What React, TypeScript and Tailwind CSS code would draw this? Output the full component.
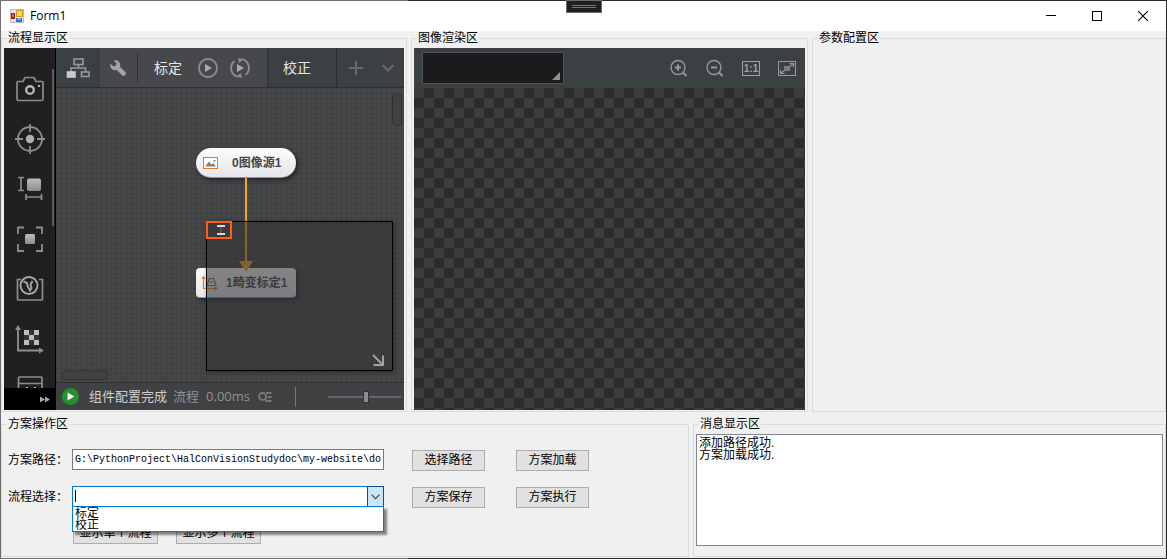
import React from "react";

const cjk = "font-['Liberation_Sans','Noto_Sans_CJK_SC',sans-serif]";

function Group({ title, children }: { title: string; children?: React.ReactNode }) {
  return (
    <fieldset className="flex min-w-0 flex-col border border-[#dcdcdc]">
      <legend className="ml-[5px] px-px text-xs leading-[14px]">{title}</legend>
      {children}
    </fieldset>
  );
}

function FormIcon() {
  return (
    <svg width="14" height="14" viewBox="0 0 14 14" aria-hidden="true">
      <rect width="14" height="14" fill="#b9bcbf" />
      <rect x="1" y="1" width="12" height="12" fill="#e4e6e8" />
      <rect x="6" y="1" width="7" height="7" fill="#d99a1c" />
      <rect x="7" y="2" width="5" height="5" fill="#ffd75e" />
      <rect x="1" y="4" width="4" height="6" fill="#a81c12" />
      <rect x="2" y="5" width="2" height="3" fill="#e8604e" />
      <rect x="6" y="9" width="6" height="4" fill="#2f6fd0" />
      <rect x="7" y="9" width="4" height="2" fill="#73abf2" />
    </svg>
  );
}

function TitleBar() {
  const btn = "flex h-[30px] w-[46px] items-center justify-center";
  return (
    <header className="relative flex h-[30px] items-center bg-white pl-[9px]">
      <FormIcon />
      <h1 className="ml-[6px] font-['Open_Sans','Noto_Sans',sans-serif] text-xs">Form1</h1>
      <div className="absolute -top-px left-1/2 flex h-[13px] w-9 -translate-x-1/2 flex-col items-center justify-center gap-px border border-[#6a6a6a] bg-[#1f1f1f]">
        <span className="h-px w-6 bg-[#777]" />
        <span className="h-px w-6 bg-[#777]" />
      </div>
      <div className="ml-auto flex">
        <button className={btn} aria-label="最小化">
          <svg width="10" height="10" viewBox="0 0 10 10"><path d="M0 4.500H10" stroke="#000" /></svg>
        </button>
        <button className={btn} aria-label="最大化">
          <svg width="10" height="10" viewBox="0 0 10 10"><rect x=".5" y=".5" width="9" height="9" fill="none" stroke="#000" /></svg>
        </button>
        <button className={btn} aria-label="关闭">
          <svg width="10" height="10" viewBox="0 0 10 10"><path d="M0 0L10 10M10 0L0 10" stroke="#000" strokeWidth="1.1" /></svg>
        </button>
      </div>
    </header>
  );
}

const tools: { name: string; art: React.ReactNode }[] = [
  {
    name: "图像采集",
    art: (
      <>
        <path d="M2.500 7.500H8L10 3.500H19L21 7.500H27Q28 7.500 28 8.500V25Q28 26.500 26.500 26.500H3.500Q2 26.500 2 25V8.500Q2 7.500 3 7.500Z" stroke="#8d8d8d" strokeWidth="1.700" />
        <circle cx="15" cy="16" r="3.800" stroke="#b5b5b5" strokeWidth="2.400" />
        <rect x="23" y="11" width="2" height="2" fill="#b5b5b5" />
      </>
    ),
  },
  {
    name: "定位",
    art: (
      <>
        <circle cx="15" cy="15" r="12" stroke="#8d8d8d" strokeWidth="1.800" />
        <path d="M15 0V8M15 22V30M0 15H8M22 15H30" stroke="#8d8d8d" strokeWidth="1.800" />
        <circle cx="15" cy="15" r="4.200" fill="#b0b0b0" />
      </>
    ),
  },
  {
    name: "测量",
    art: (
      <>
        <path d="M3 3.500H9M3 16.500H9M6 3.500V16.500M11 20V26M26.500 20V26M11 23H26.500" stroke="#8d8d8d" strokeWidth="1.700" />
        <rect x="12" y="4.500" width="14" height="12.500" rx="2" fill="url(#tool-face)" />
      </>
    ),
  },
  {
    name: "识别",
    art: (
      <>
        <path d="M3 10V3.500H9M21 3.500H27V10M27 20V27H21M9 27H3V20" stroke="#8d8d8d" strokeWidth="1.800" />
        <rect x="10" y="10" width="10" height="10" rx="1.500" fill="url(#tool-face)" />
      </>
    ),
  },
  {
    name: "图像处理",
    art: (
      <>
        <path d="M6 5.500H2.500V25Q2.500 26 3.500 26H26.500Q27.500 26 27.500 25V5.500H24" stroke="#8d8d8d" strokeWidth="1.700" />
        <circle cx="14" cy="11.500" r="8.500" stroke="#a9a9a9" strokeWidth="1.800" />
        <path d="M8.500 7.500L12 9L12.500 12L15 16.500L16.500 14L15.500 10.500L17.500 7" stroke="#a0a0a0" strokeWidth="2" />
      </>
    ),
  },
  {
    name: "标定",
    art: (
      <>
        <path d="M3 3V26.500H26" stroke="#8d8d8d" strokeWidth="1.800" />
        <path d="M0 6L3 1L6 6ZM24 23.500L29 26.500L24 29.500Z" fill="#8d8d8d" />
        <path d="M9 6H14V11H9ZM19 6H24V11H19ZM14 11H19V16H14ZM9 16H14V21H9ZM19 16H24V21H19Z" fill="#bdbdbd" />
        <path d="M14 6H19V11H14ZM9 11H14V16H9ZM19 11H24V16H19ZM14 16H19V21H14Z" fill="#333334" />
      </>
    ),
  },
  {
    name: "运算",
    art: (
      <>
        <path d="M3.500 20V4Q3.500 3 4.500 3H26Q27 3 27 4V20M3.500 9.500H27" stroke="#8d8d8d" strokeWidth="1.700" />
        <path d="M11 14H13M19 14H21" stroke="#bdbdbd" strokeWidth="2" />
      </>
    ),
  },
];

function ToolRail() {
  return (
    <nav className="flex w-[52px] shrink-0 flex-col border-r border-black bg-[#202022]">
      <div className="relative h-0 min-h-0 grow overflow-hidden pt-4">
        {tools.map((t) => (
          <button key={t.name} aria-label={t.name} className="flex h-[50px] w-full items-center justify-center">
            <svg width="30" height="30" viewBox="0 0 30 30" fill="none">
              <defs>
                <linearGradient id="tool-face" x2="0" y2="1">
                  <stop stopColor="#bcbcbc" />
                  <stop offset="1" stopColor="#8c8c8c" />
                </linearGradient>
              </defs>
              {t.art}
            </svg>
          </button>
        ))}
        <span className="absolute right-px top-[21px] h-[157px] w-0.5 bg-[#5c5c5c]" />
      </div>
      <button aria-label="展开" className="flex h-[22px] shrink-0 items-center justify-end bg-black pr-[5px]">
        <svg width="10" height="7" viewBox="0 0 10 7" fill="#a8a8a8"><path d="M0 .5L5 3.500L0 6.500ZM5 .5L10 3.500L5 6.500Z" /></svg>
      </button>
    </nav>
  );
}

function FlowToolbar() {
  return (
    <div className="flex h-10 items-stretch border-b border-[#2d2f31] bg-[#3b4043] text-sm text-[#e6e6e6]">
      <button aria-label="流程" className="flex w-11 items-center justify-center">
        <svg width="24" height="20" viewBox="0 0 24 20" fill="none" stroke="#999" strokeWidth="1.600">
          <rect x="8" y="1" width="9" height="5.500" />
          <path d="M12.500 6.500V10M5 14V10H19.500V14" />
          <rect x="15.500" y="14" width="7.500" height="4.500" />
          <rect x="1.500" y="14" width="7.500" height="5" fill="#ccc" stroke="#ccc" />
        </svg>
      </button>
      <div className="flex w-[167px] items-center bg-[#47484b]">
        <button aria-label="设置" className="flex h-full w-9 items-center justify-center">
          <svg width="16" height="16" viewBox="0 0 16 16" fill="#a3a3a3">
            <path d="M3.600.5A5 5 0 0 1 10 6.800L15.300 12.100A1.800 1.800 0 0 1 15.300 14.700L14.700 15.300A1.800 1.800 0 0 1 12.100 15.300L6.800 10A5 5 0 0 1 .5 3.600L3.400 6.500L5.700 5.800L6.500 3.400Z" />
          </svg>
        </button>
        <span className="ml-px h-[30px] w-px bg-[#2d2f31]" />
        <button className="ml-4">标定</button>
        <button aria-label="运行一次" className="ml-4">
          <svg width="20" height="20" viewBox="0 0 20 20" fill="none" stroke="#8e8e8e" strokeWidth="1.800">
            <circle cx="10" cy="10" r="9" />
            <path d="M7 6L14 10L7 14Z" fill="#aaa" stroke="none" />
          </svg>
        </button>
        <button aria-label="连续运行" className="ml-3">
          <svg width="20" height="20" viewBox="0 0 20 20" fill="none" stroke="#8e8e8e" strokeWidth="1.800">
            <path d="M8 18.800A9 9 0 0 1 4.500 3M1.200 12A9 9 0 0 1 1.500 7M12 1.200A9 9 0 0 1 15.500 17M17.500 5A9 9 0 0 1 18.500 13" />
            <path d="M8 0L13.500 1.500L9 5ZM12 20L6.500 18.500L11 15Z" fill="#8e8e8e" stroke="none" />
            <path d="M7 6L14 10L7 14Z" fill="#aaa" stroke="none" />
          </svg>
        </button>
      </div>
      <button className="w-[70px] border-x border-[#2d2f31] pr-[10px]">校正</button>
      <div className="flex flex-1 items-center justify-between pl-3 pr-[10px]">
        <button aria-label="新建流程">
          <svg width="14" height="14" viewBox="0 0 14 14" stroke="#686b6d" strokeWidth="2"><path d="M0 7H14M7 0V14" /></svg>
        </button>
        <button aria-label="更多流程">
          <svg width="12" height="8" viewBox="0 0 12 8" fill="none" stroke="#686b6d" strokeWidth="2"><path d="M.7 1L6 6.500L11.300 1" /></svg>
        </button>
      </div>
    </div>
  );
}

function FlowCanvas() {
  const node =
    "absolute flex h-[30px] w-[100px] items-center border-b border-[#b98c6c] bg-linear-to-b from-[#fcfcfb] to-[#e4e6eb] text-xs font-bold text-[#464646] shadow-[2px_2px_4px_rgba(0,0,0,0.5)]";
  return (
    <div className="relative min-h-0 flex-1 overflow-hidden bg-[#464749] bg-[linear-gradient(to_right,#3f4042_1px,transparent_1px),linear-gradient(to_bottom,#3f4042_1px,transparent_1px)] bg-size-[5px_5px]">
      <div className={`${node} left-[140px] top-[60px] rounded-full pl-[7px]`}>
        <svg width="15" height="12" viewBox="0 0 15 12">
          <rect x=".5" y=".5" width="14" height="11" fill="#fff" stroke="#f07818" />
          <path d="M2 9.500L6 4.500L8.500 7.500L10.500 6L13 9.500Z" fill="#7c8288" />
          <circle cx="11.500" cy="3.800" r="1.100" fill="#7c8288" />
        </svg>
        <span className="ml-[14px]">0图像源1</span>
      </div>
      <div className={`${node} left-[140px] top-[180px] rounded-sm pl-[5px]`}>
        <svg width="18" height="16" viewBox="0 0 18 16" fill="none">
          <path d="M2.500 2V13.500H15" stroke="#f07818" strokeWidth="1.200" />
          <path d="M.5 4L2.500 .5L4.500 4ZM13.500 11.500L17 13.500L13.500 15.500Z" fill="#f07818" />
          <path d="M8.500 3.500H12.500L15 10.500H6ZM9 7H12" stroke="#777" strokeWidth="1.200" />
        </svg>
        <span className="ml-[7px]">1畸变标定1</span>
      </div>
      <svg className="absolute left-[183px] top-[90px]" width="14" height="94" viewBox="0 0 14 94" fill="#ffa516">
        <path d="M6 0H8V84H6ZM0 83H14L7 94Z" />
      </svg>
      <div className="absolute left-[150px] top-[133px] h-[150px] w-[187px] border border-black bg-[#363638]/60 shadow-[1px_1px_4px_rgba(0,0,0,0.4)]">
        <div className="absolute -left-px -top-px flex h-[18px] w-[26px] items-center justify-center border-2 border-[#ff5e14] bg-[#3a3a3c]">
          <svg className="ml-[3px]" width="8" height="10" viewBox="0 0 8 10">
            <path d="M0 0H8V2H0ZM0 8H8V10H0Z" fill="#d8d8d8" />
            <path d="M4 2V8" stroke="#8a6a35" />
          </svg>
        </div>
        <svg className="absolute bottom-1 right-2" width="12" height="12" viewBox="0 0 12 12" fill="none" stroke="#a0a0a0" strokeWidth="2">
          <path d="M1 1L10 10M11 1.500V11H1.500" />
        </svg>
      </div>
      <span className="absolute right-[2px] top-[5px] h-[33px] w-[10px] rounded-sm border border-[#303234] bg-[#404143]" />
      <span className="absolute bottom-[2px] left-[5px] h-[10px] w-[47px] rounded-sm border border-[#303234] bg-[#404143]" />
    </div>
  );
}

function StatusBar() {
  return (
    <div className="flex h-7 shrink-0 items-center border-t border-[#2d2f31] bg-[#3f4143] pl-[6px] pr-[3px] text-[13px] whitespace-nowrap text-[#929292]">
      <button aria-label="运行">
        <svg width="17" height="17" viewBox="0 0 17 17"><circle cx="8.500" cy="8.500" r="8.500" fill="#24912e" /><path d="M5.500 4.500L12.500 8.500L5.500 12.500Z" fill="#f2f2f2" /></svg>
      </button>
      <span className="ml-[10px] text-[#cfcfcf]">组件配置完成</span>
      <span className="ml-[6px]">流程</span>
      <span className="ml-[7px] font-['Open_Sans','Noto_Sans',sans-serif]">0.00ms</span>
      <svg className="ml-2" width="14" height="12" viewBox="0 0 14 12" fill="none" stroke="#77797b" strokeWidth="1.800" aria-hidden="true">
        <circle cx="4.500" cy="5.500" r="3.500" />
        <path d="M7 8L9 11M8 2H13.500M9.500 6H13.500M9 10H13.500" />
      </svg>
      <span className="ml-[23px] h-5 w-px bg-[#77797b]" />
      <input
        type="range"
        aria-label="缩放"
        defaultValue={52}
        className="ml-8 h-3 w-0 min-w-0 flex-1 appearance-none bg-[linear-gradient(#63656a,#63656a)] bg-size-[100%_2px] bg-center bg-no-repeat [&::-webkit-slider-thumb]:h-3 [&::-webkit-slider-thumb]:w-[6px] [&::-webkit-slider-thumb]:appearance-none [&::-webkit-slider-thumb]:border [&::-webkit-slider-thumb]:border-[#303234] [&::-webkit-slider-thumb]:bg-[#8b8b93]"
      />
    </div>
  );
}

function RenderToolbar() {
  return (
    <div className="flex h-10 items-center justify-between bg-[#3b4043] pl-2 pr-[9px]">
      <div className="relative">
        <select aria-label="图像" className="block h-8 w-[142px] appearance-none rounded-xs border border-[#505254] bg-[#1b1b1d] text-[#ccc]">
          <option value=""></option>
        </select>
        <svg className="pointer-events-none absolute bottom-1 right-1" width="8" height="8" viewBox="0 0 8 8" fill="#929292"><path d="M8 0V8H0Z" /></svg>
      </div>
      <div className="flex items-center gap-[18px]">
        <button aria-label="放大">
          <svg width="18" height="18" viewBox="0 0 18 18" fill="none" stroke="#999" strokeWidth="1.400">
            <circle cx="8" cy="8.500" r="7" />
            <path d="M13 13.500L16.500 17" strokeWidth="2" />
            <path d="M5 8.500H11M8 5.500V11.500" strokeWidth="2" />
          </svg>
        </button>
        <button aria-label="缩小">
          <svg width="18" height="18" viewBox="0 0 18 18" fill="none" stroke="#999" strokeWidth="1.400">
            <circle cx="8" cy="8.500" r="7" />
            <path d="M13 13.500L16.500 17" strokeWidth="2" />
            <path d="M5 8.500H11" strokeWidth="2" />
          </svg>
        </button>
        <button className="h-[15px] w-[18px] border border-[#a0a0a0] text-center text-[10px] leading-[13px] font-bold text-[#a0a0a0]">1:1</button>
        <button aria-label="适应窗口">
          <svg width="18" height="15" viewBox="0 0 18 15" fill="none" stroke="#999">
            <rect x=".5" y=".5" width="17" height="14" />
            <rect x="6" y="5" width="6" height="5" fill="#7c7c7c" stroke="none" />
            <path d="M3 12L6.500 9.500M11.500 5.500L15 3M11.500 2.500H15.500V6M2.500 9V12.500H6.500" strokeWidth="1.200" />
          </svg>
        </button>
      </div>
    </div>
  );
}

const winButton = "h-[21px] border border-[#adadad] bg-[#e1e1e1] text-xs leading-[19px]";

function SchemePanel() {
  return (
    <div className="flex items-start gap-7 pb-3 pl-[6px] text-xs">
      <div className="grid grid-cols-[64px_312px] items-center gap-y-4 pt-[18px]">
        <label htmlFor="scheme-path">方案路径：</label>
        <input
          id="scheme-path"
          className="h-[21px] border border-[#7a7a7a] bg-white px-[2px] font-['Liberation_Mono',monospace] text-[10px] text-black"
          defaultValue="G:\PythonProject\HalConVisionStudydoc\my-website\do"
        />
        <label htmlFor="flow-choice">流程选择：</label>
        <div className="relative flex h-[21px]">
          <input
            id="flow-choice"
            role="combobox"
            aria-expanded="true"
            aria-controls="flow-options"
            className="min-w-0 flex-1 border border-r-0 border-[#0078d7] bg-white px-1 outline-none"
          />
          <span className="absolute left-[3px] top-1 h-3 w-px bg-black" />
          <button aria-label="展开流程列表" className="flex w-[17px] items-center justify-center border border-[#005499] bg-[#cce4f7]">
            <svg width="9" height="6" viewBox="0 0 9 6" fill="none" stroke="#444" strokeWidth="1.200"><path d="M.5 .7L4.500 4.700L8.500 .7" /></svg>
          </button>
          <ul
            id="flow-options"
            role="listbox"
            aria-label="流程"
            className="absolute left-0 top-5 z-10 w-full border border-[#0078d7] bg-white pl-[2px] leading-3 shadow-[3px_3px_2px_rgba(0,0,0,0.45)]"
          >
            <li role="option" aria-selected="false">标定</li>
            <li role="option" aria-selected="false">校正</li>
          </ul>
        </div>
        <div className="col-start-2 flex gap-[18px] pl-px">
          <button className={`${winButton} w-[85px]`}>显示单个流程</button>
          <button className={`${winButton} w-[85px]`}>显示多个流程</button>
        </div>
      </div>
      <div className="grid grid-cols-[73px_73px] gap-x-[31px] gap-y-4 pt-[19px]">
        <button className={winButton}>选择路径</button>
        <button className={winButton}>方案加载</button>
        <button className={winButton}>方案保存</button>
        <button className={winButton}>方案执行</button>
      </div>
    </div>
  );
}

export default function App() {
  return (
    <div className={`flex min-h-screen flex-col bg-[linear-gradient(to_right,#707070_35%,#29292b_35%)] p-px text-black ${cjk}`}>
      <TitleBar />
      <main className="flex flex-1 flex-col gap-[5px] bg-[#f0f0f0] pb-px">
        <div className="grid min-h-80 flex-1 grid-cols-[minmax(0,406fr)_minmax(0,397fr)_minmax(0,354fr)] gap-1">
          <Group title="流程显示区">
            <div className="mx-[2px] mb-px mt-[3px] flex min-h-0 flex-1">
              <ToolRail />
              <div className="flex min-w-0 flex-1 flex-col">
                <FlowToolbar />
                <FlowCanvas />
                <StatusBar />
              </div>
            </div>
          </Group>
          <Group title="图像渲染区">
            <div className="mx-[2px] mb-px mt-[3px] flex min-h-0 flex-1 flex-col">
              <RenderToolbar />
              <div className="flex-1 bg-[repeating-conic-gradient(#2c2c2c_0_25%,#3c3c3c_0_50%)] bg-size-[20px_20px]" />
            </div>
          </Group>
          <Group title="参数配置区" />
        </div>
        <div className="grid grid-cols-[minmax(0,688fr)_minmax(0,473fr)] gap-1">
          <Group title="方案操作区">
            <SchemePanel />
          </Group>
          <Group title="消息显示区">
            <ul aria-label="消息" className="mb-[10px] ml-[2px] mr-[2px] mt-[3px] flex-1 border border-[#828790] bg-white px-[2px] pt-[2px] text-xs leading-3">
              <li>添加路径成功.</li>
              <li>方案加载成功.</li>
            </ul>
          </Group>
        </div>
      </main>
    </div>
  );
}
